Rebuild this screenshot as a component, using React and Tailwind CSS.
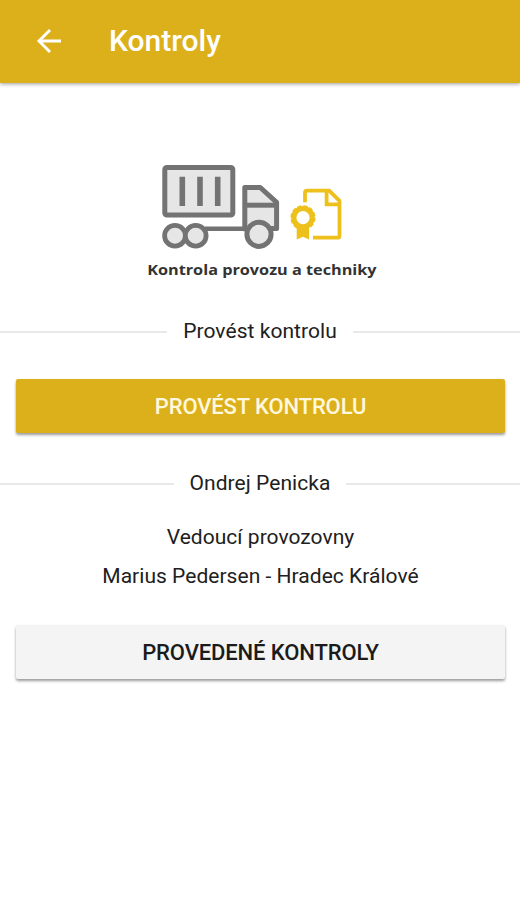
import React from 'react';

const TruckIcon = () => (
  <svg className="w-[120px] h-[90px]" viewBox="160 162 120 90" fill="#e6e6e6" stroke="#737373" strokeWidth="5">
    {/* Container */}
    <rect x="164.8" y="167.4" width="68" height="47.6" rx="2" />
    <path d="M182.3 176.7V206M200 176.7V206M217.7 176.7V206" strokeWidth="5.6" />

    {/* Cab and frame */}
    <path d="M205 228.7H246" strokeWidth="4.6" />
    <path d="M244.8 229V187.5H260.3L276.6 202.3V228.4H244.8Z" strokeLinejoin="round" />
    <path d="M245 205.2H277" />

    {/* Wheels */}
    <circle cx="175" cy="235.7" r="10.4" strokeWidth="4.8" />
    <circle cx="195.7" cy="235.7" r="10.4" strokeWidth="4.8" />
    <circle cx="259" cy="234.3" r="12.1" />
  </svg>
);

const CertificateIcon = () => (
  <svg className="w-[66px] h-[90px]" viewBox="280 162 66 90" fill="none" stroke="#edc01c" strokeWidth="3.8">
    <path d="M305 202.3V192.7Q305 190.7 307 190.7H329.2L339.5 200.8V235.7Q339.5 237.7 337.5 237.7H313" />
    <path d="M326.6 190V204.3H340" />
    <circle cx="303" cy="217.7" r="9.2" strokeWidth="5.2" />
    <circle cx="303" cy="217.7" r="11.8" strokeWidth="1.5" strokeDasharray="4.2 1.98" />
    <path d="M296.7 227V239.6L303 236.7L309 239.6V227Z" fill="#edc01c" stroke="none" />
  </svg>
);

const Divider = ({ children }) => (
  <div className="flex items-center h-6">
    <div className="flex-1 h-[2px] bg-[#e9e9e9] mt-0.5" />
    <span className="px-4 text-[21px] leading-6 tracking-[0.05px]">{children}</span>
    <div className="flex-1 h-[2px] bg-[#e9e9e9] mt-0.5" />
  </div>
);

const App = () => {
  return (
    <div className="w-[520px] h-[900px] bg-white overflow-hidden text-[#202020] font-['Roboto',sans-serif]">
      {/* Header */}
      <header className="flex items-center h-[83px] pl-9 pb-px bg-[#dcb01a] text-white shadow-[0_1px_4px_rgba(0,0,0,0.4)]">
        <button aria-label="Zpět">
          <svg className="w-[26px] h-[26px]" viewBox="0 0 26 26" fill="none" stroke="currentColor" strokeWidth="2.9">
            <path d="M25 13H3M14 2L3 13L14 24" />
          </svg>
        </button>
        <h1 className="ml-[47px] text-[30px] leading-9 font-medium">Kontroly</h1>
      </header>

      <main>
        {/* Illustration */}
        <div className="flex pt-[79px] pl-[160px]">
          <TruckIcon />
          <CertificateIcon />
        </div>
        <div className="flex justify-center h-5 mt-2 pl-1">
          <p className="origin-center scale-x-[1.16] whitespace-nowrap text-[14px] leading-5 font-bold text-[#333] font-['Open_Sans',sans-serif]">
            Kontrola provozu a techniky
          </p>
        </div>

        <div className="mt-[39px]">
          <Divider>Provést kontrolu</Divider>
        </div>

        <div className="pl-4 pr-[15px] mt-9">
          <button className="w-full h-[54px] rounded-[2px] bg-[#dcb01a] text-[#fff8df] text-[22px] font-medium tracking-[-0.12px] shadow-[0_2px_3px_rgba(0,0,0,0.4)]">
            PROVÉST KONTROLU
          </button>
        </div>

        <div className="mt-[38px]">
          <Divider>Ondrej Penicka</Divider>
        </div>

        <div className="mt-[23px] pl-px text-center text-[21px] leading-[39px] tracking-[0.03px]">
          <p>Vedoucí provozovny</p>
          <p>Marius Pedersen - Hradec Králové</p>
        </div>

        <div className="pl-4 pr-[15px] mt-[29px]">
          <button className="w-full h-[54px] rounded-[2px] bg-[#f4f4f4] text-[#1b1b1b] text-[22px] font-medium tracking-[-0.12px] shadow-[0_2px_3px_rgba(0,0,0,0.4)]">
            PROVEDENÉ KONTROLY
          </button>
        </div>
      </main>
    </div>
  );
};

export default App;
